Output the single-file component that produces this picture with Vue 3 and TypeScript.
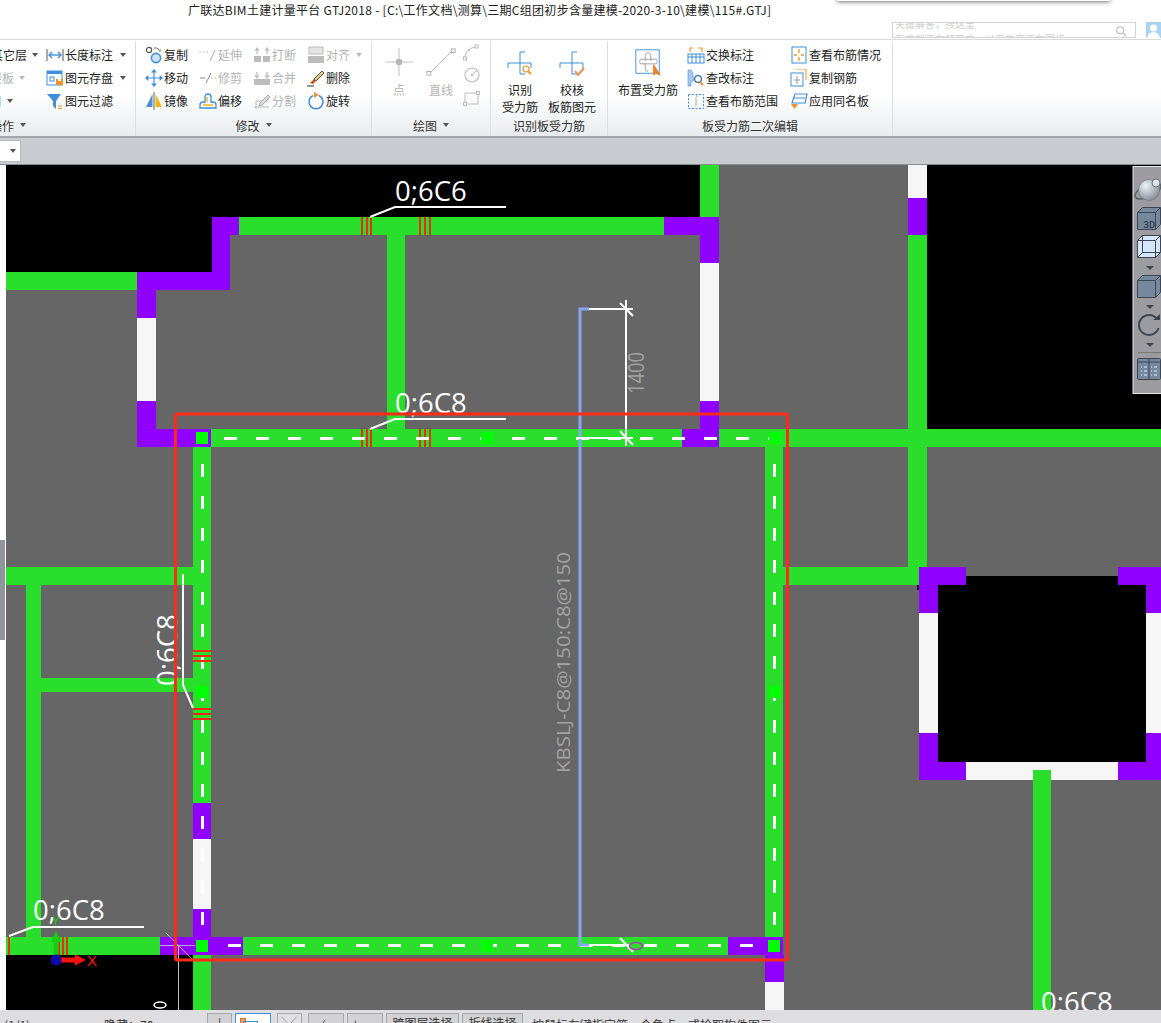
<script setup lang="ts">
// ribbon data + drawing data, coordinates of the canvas are page pixels (see viewBox)
interface Tool {
  label: string
  icon: string
  off?: boolean
  caret?: boolean
}

const B = '#3f8fdc'
const O = '#f0922b'
const G = '#bcbcbc'

const icons: Record<string, string> = {
  length: `<path d="M1 3v12M17 3v12" stroke="#555"/><path d="M3 9h12" stroke="${B}" stroke-width="1.4"/><path d="M6 6L3 9l3 3M12 6l3 3-3 3" fill="none" stroke="${B}" stroke-width="1.4"/>`,
  save: `<rect x="1" y="2" width="15" height="14" fill="#fff" stroke="${B}"/><rect x="1" y="2" width="15" height="3" fill="${B}"/><rect x="4" y="8" width="4" height="4" fill="none" stroke="${B}"/><rect x="10" y="10" width="7" height="6" fill="${O}"/><rect x="12" y="10" width="3" height="2" fill="#fff"/>`,
  filter: `<path d="M1 2h14L10 9v8L7 14V9z" fill="${B}"/><path d="M12 14h4M12 16.500h4" stroke="${O}" stroke-width="1.2"/>`,
  copy: `<circle cx="4" cy="4" r="2.600" fill="none" stroke="#555" stroke-width="1.2"/><path d="M9 2h3l2 2M15 3v3" fill="none" stroke="#777"/><circle cx="11" cy="12" r="4.600" fill="#cfe2f6" stroke="${B}" stroke-width="1.6"/>`,
  move: `<path d="M3 9h12M9 3v12" stroke="${B}" stroke-width="1.2"/><path d="M9 0l3 3.400H6zM9 18l3-3.400H6zM0 9l3.400-3v6zM18 9l-3.400-3v6z" fill="${B}"/>`,
  mirror: `<path d="M7.500 2v13H1z" fill="#4a8fd8"/><path d="M10.500 2v13H17z" fill="#f5b50f"/><path d="M9 0v18" stroke="#666"/>`,
  extend: `<path d="M0 6h9" stroke="${G}" stroke-dasharray="2 1.5"/><path d="M11 15l5-11" stroke="${G}" stroke-width="1.2"/>`,
  trim: `<path d="M1 9h5" stroke="#888"/><path d="M7 14l5-10" stroke="#888"/><path d="M12 9h6" stroke="${G}" stroke-dasharray="2 1.5"/>`,
  offset: `<path d="M1 16v-3q0-3 3-3h2V5q0-3 3-3t3 3v5h2q3 0 3 3v3z" fill="none" stroke="${B}" stroke-width="1.3"/><path d="M4 13h10M8 10V5" fill="none" stroke="#f5b50f" stroke-width="1.3"/>`,
  breakIt: `<rect x="1" y="10" width="7" height="6" fill="${G}"/><rect x="10" y="10" width="7" height="6" fill="${G}"/><path d="M4 3v5M14 3v5M2 5l2-3 2 3M12 5l2-3 2 3" fill="none" stroke="${G}" stroke-width="1.2"/>`,
  merge: `<rect x="1" y="10" width="16" height="6" fill="${G}"/><path d="M4 3v5M14 3v5M2 6l2 3 2-3M12 6l2 3 2-3" fill="none" stroke="${G}" stroke-width="1.2"/>`,
  split: `<path d="M1 15h15M3 17V9h12" fill="none" stroke="${G}"/><path d="M7 11l8-8 2 2-8 8-3 1z" fill="#ddd" stroke="#a8a8a8"/>`,
  align: `<rect x="2" y="1" width="14" height="7" fill="#e4e4e4" stroke="${G}"/><rect x="1" y="10" width="16" height="7" fill="${G}"/>`,
  erase: `<path d="M7 10l8-8 2 2-8 8z" fill="#e9c57a" stroke="#555"/><path d="M7 10l2 2-3 3-3-1z" fill="#c8501e"/><path d="M0 17h7" stroke="#333"/>`,
  rotate: `<path d="M6 3.500a7 7 0 1 0 6 0" fill="none" stroke="${B}" stroke-width="1.5"/><path d="M7 0l5 3-5 3z" fill="${O}"/>`,
  arc: `<path d="M2 15q0-9 10-11" fill="none" stroke="${G}"/><rect x="0.500" y="14" width="3" height="3" fill="#fff" stroke="${G}"/><rect x="12" y="2" width="3" height="3" fill="#fff" stroke="${G}"/><rect x="5" y="6" width="2" height="2" fill="${G}"/>`,
  circle: `<circle cx="9" cy="9" r="7" fill="none" stroke="${G}" stroke-width="1.2"/><circle cx="9" cy="9" r="1.2" fill="${G}"/><path d="M10 8l3-3" stroke="${G}"/>`,
  rect: `<rect x="2" y="4" width="13" height="11" fill="none" stroke="${G}"/><rect x="0.500" y="13.500" width="3" height="3" fill="#fff" stroke="${G}"/><rect x="13.500" y="2.500" width="3" height="3" fill="#fff" stroke="${G}"/>`,
  swap: `<rect x="1" y="8" width="16" height="9" fill="#fff" stroke="${B}"/><path d="M1 11h16M5 8v9M9 8v9M13 8v9" stroke="${B}"/><path d="M3 6V2h3M11 2h4v4" fill="none" stroke="${O}" stroke-width="1.2"/>`,
  check: `<path d="M1 1h3l2 3v4l1 3-3 2v4H1z" fill="#a9c8ec" stroke="${B}" stroke-width=".6"/><circle cx="11" cy="10" r="3.400" fill="#fff" stroke="#3a6ea8" stroke-width="1.3"/><path d="M13 13l3 3" stroke="${O}" stroke-width="2"/>`,
  range: `<rect x="1.500" y="2.500" width="15" height="14" fill="none" stroke="${B}" stroke-dasharray="2 1.5"/><path d="M9 5v9" stroke="#aaa"/><path d="M9 4h2" stroke="${O}"/>`,
  view: `<rect x="2" y="1" width="14" height="16" fill="none" stroke="${B}"/><path d="M9 3v4M9 11v4M4 9h3M11 9h3" stroke="${O}" stroke-width="1.3"/>`,
  copyBar: `<path d="M5 0h11v11" fill="none" stroke="${O}"/><rect x="1" y="4" width="12" height="13" fill="#fff" stroke="${B}"/><path d="M7 7v8M4 11h6" stroke="#999"/>`,
  apply: `<path d="M5 2h12l-2 9H2z" fill="#fff" stroke="${B}" stroke-width="1.2"/><path d="M4 6h11" stroke="${B}"/><path d="M1 12h7l-3.500 5z" fill="${O}"/>`,
}

const editTools: Tool[] = [
  { label: '复制', icon: 'copy' },
  { label: '延伸', icon: 'extend', off: true },
  { label: '打断', icon: 'breakIt', off: true },
  { label: '对齐', icon: 'align', off: true, caret: true },
  { label: '移动', icon: 'move' },
  { label: '修剪', icon: 'trim', off: true },
  { label: '合并', icon: 'merge', off: true },
  { label: '删除', icon: 'erase' },
  { label: '镜像', icon: 'mirror' },
  { label: '偏移', icon: 'offset' },
  { label: '分割', icon: 'split', off: true },
  { label: '旋转', icon: 'rotate' },
]

const markTools: Tool[] = [
  { label: '长度标注', icon: 'length', caret: true },
  { label: '图元存盘', icon: 'save', caret: true },
  { label: '图元过滤', icon: 'filter' },
]

const rebarTools: Tool[] = [
  { label: '交换标注', icon: 'swap' },
  { label: '查看布筋情况', icon: 'view' },
  { label: '查改标注', icon: 'check' },
  { label: '复制钢筋', icon: 'copyBar' },
  { label: '查看布筋范围', icon: 'range' },
  { label: '应用同名板', icon: 'apply' },
]

const GREEN = '#2adf2c'
const PURPLE = '#8f00ff'
const WHITE = '#f6f6f6'
const BLACK = '#000'

type Box = [number, number, number, number, string]

// x, y, w, h, colour
const boxes: Box[] = [
  // black rooms
  [6, 165, 694, 52, BLACK],
  [6, 217, 206, 55, BLACK],
  [927, 165, 234, 265, BLACK],
  [6, 955, 187, 55, BLACK],
  [938, 585, 208, 177, BLACK],
  [966, 576, 152, 9, BLACK],
  [917, 575, 3, 15, BLACK],
  // top room
  [700, 165, 19, 52, GREEN],
  [239, 217, 425, 18, GREEN],
  [664, 217, 55, 18, PURPLE],
  [700, 235, 19, 28, PURPLE],
  [700, 263, 19, 138, WHITE],
  [700, 401, 19, 29, PURPLE],
  [387, 235, 18, 195, GREEN],
  [212, 217, 27, 18, PURPLE],
  [212, 235, 18, 37, PURPLE],
  [137, 272, 93, 18, PURPLE],
  [6, 272, 131, 18, GREEN],
  [137, 290, 19, 28, PURPLE],
  [137, 318, 19, 83, WHITE],
  [137, 401, 19, 46, PURPLE],
  // long horizontal
  [211, 429, 950, 18, GREEN],
  [137, 429, 74, 18, PURPLE],
  [682, 429, 37, 18, PURPLE],
  // right column
  [908, 165, 19, 33, WHITE],
  [908, 198, 19, 37, PURPLE],
  [908, 235, 19, 332, GREEN],
  [783, 567, 136, 18, GREEN],
  // main room
  [193, 447, 18, 356, GREEN],
  [193, 803, 18, 36, PURPLE],
  [193, 839, 18, 70, WHITE],
  [193, 909, 18, 28, PURPLE],
  [193, 955, 18, 55, GREEN],
  [765, 447, 18, 490, GREEN],
  [765, 955, 19, 27, PURPLE],
  [765, 982, 19, 28, WHITE],
  [6, 937, 154, 18, GREEN],
  [160, 937, 83, 18, PURPLE],
  [243, 937, 485, 18, GREEN],
  [728, 937, 55, 18, PURPLE],
  // left rooms
  [6, 567, 187, 18, GREEN],
  [26, 585, 15, 352, GREEN],
  [41, 678, 152, 14, GREEN],
  // square block
  [919, 567, 47, 18, PURPLE],
  [919, 585, 19, 28, PURPLE],
  [919, 613, 19, 120, WHITE],
  [919, 733, 19, 47, PURPLE],
  [938, 762, 28, 18, PURPLE],
  [966, 762, 152, 18, WHITE],
  [1118, 762, 43, 18, PURPLE],
  [1146, 733, 15, 29, PURPLE],
  [1146, 613, 15, 120, WHITE],
  [1118, 567, 43, 18, PURPLE],
  [1146, 585, 15, 28, PURPLE],
  [1033, 770, 18, 240, GREEN],
]

const range = (from: number, to: number, step: number) => {
  const out: number[] = []
  for (let v = from; v <= to; v += step) out.push(v)
  return out
}

const dashTopX = range(224, 768, 32)
const dashBottomX = range(228, 740, 32)
const dashY = range(464, 912, 32)

const nodes = [
  [202, 438], [487, 438], [775, 438],
  [202, 692], [775, 692],
  [202, 946], [487, 946], [774, 946],
]

const rebarX = [361, 366, 370, 419, 424, 429]
const rebarLow = [8, 58, 62, 66]
const rebarH = [650, 655, 660, 708, 713, 718]
</script>

<template>
  <div class="app">
    <header class="title-bar">
      <div class="title">广联达BIM土建计量平台 GTJ2018 - [C:\工作文档\测算\三期C组团初步含量建模-2020-3-10\建模\115#.GTJ]</div>
      <div class="float-shadow"></div>
      <div class="search-row">
        <div class="search">
          <div class="search-text">
            <span>关键解答，搜这里</span>
            <span>有文档正在打开中，以下内容正在同步</span>
          </div>
          <svg class="glass" viewBox="0 0 14 14"><circle cx="6" cy="6" r="4" fill="none" stroke="#bbb" stroke-width="1.2"/><path d="M9 9l4 4" stroke="#bbb" stroke-width="1.4"/></svg>
        </div>
        <svg class="user" viewBox="0 0 15 16"><rect width="15" height="16" fill="#a9d2f5"/><circle cx="7.500" cy="6" r="3.600" fill="#fff"/><path d="M1 16q1-6 6.500-6t6.500 6z" fill="#fff"/></svg>
      </div>
    </header>

    <section class="ribbon">
      <div class="group g-layer">
        <div class="group-body">
          <div class="clip-col">
            <div class="clip-row r1"><span>其它层</span><i class="caret"></i></div>
            <div class="clip-row r2 off"><span>楼板</span><i class="caret"></i></div>
            <div class="clip-row r3"><span>目</span><i class="caret"></i></div>
          </div>
          <div class="tool-col">
            <div v-for="t in markTools" :key="t.label" class="tool">
              <svg class="ico" viewBox="0 0 18 18" v-html="icons[t.icon]"></svg>
              <span>{{ t.label }}</span>
              <i v-if="t.caret" class="caret wide"></i>
            </div>
          </div>
        </div>
        <div class="group-foot foot-end"><span>操作</span><i class="caret"></i></div>
      </div>

      <div class="group g-edit">
        <div class="group-body edit-grid">
          <div v-for="t in editTools" :key="t.label" class="tool" :class="{ off: t.off }">
            <svg class="ico" viewBox="0 0 18 18" v-html="icons[t.icon]"></svg>
            <span>{{ t.label }}</span>
            <i v-if="t.caret" class="caret"></i>
          </div>
        </div>
        <div class="group-foot">修改<i class="caret"></i></div>
      </div>

      <div class="group g-draw">
        <div class="group-body">
          <div class="big off w42">
            <svg class="big-ico" viewBox="0 0 32 32"><path d="M1 16h30M16 1v30" stroke="#c4c4c4" stroke-width="1.2"/><circle cx="16" cy="16" r="3.500" fill="#b4b4b4"/></svg>
            <span>点</span>
          </div>
          <div class="big off w42">
            <svg class="big-ico" viewBox="0 0 32 32"><path d="M3 29L29 3" stroke="#b8b8b8"/><rect x="1" y="26" width="4" height="4" fill="#fff" stroke="#aaa"/><rect x="27" y="2" width="4" height="4" fill="#fff" stroke="#aaa"/></svg>
            <span>直线</span>
          </div>
          <div class="mini-col">
            <svg class="ico" viewBox="0 0 18 18" v-html="icons.arc"></svg>
            <svg class="ico" viewBox="0 0 18 18" v-html="icons.circle"></svg>
            <svg class="ico" viewBox="0 0 18 18" v-html="icons.rect"></svg>
          </div>
        </div>
        <div class="group-foot">绘图<i class="caret"></i></div>
      </div>

      <div class="group g-detect">
        <div class="group-body">
          <div class="big w52">
            <svg class="big-ico" viewBox="0 0 30 30">
              <path d="M20 5h-5v22h5M3 21v-5h23v5" fill="none" stroke="#3f8fdc" />
              <circle cx="21" cy="22" r="3" fill="#fff" stroke="#f0922b" stroke-width="1.200"/>
              <path d="M23.500 24.500l2.500 2.500" stroke="#f0922b" stroke-width="1.800"/>
            </svg>
            <span>识别</span>
            <span>受力筋</span>
          </div>
          <div class="big w52">
            <svg class="big-ico" viewBox="0 0 30 30">
              <path d="M20 5h-5v22h5M3 21v-5h23v5" fill="none" stroke="#3f8fdc" />
              <path d="M18 24l3 4 6-7" fill="none" stroke="#f08a5a" stroke-width="2"/>
            </svg>
            <span>校核</span>
            <span>板筋图元</span>
          </div>
        </div>
        <div class="group-foot">识别板受力筋</div>
      </div>

      <div class="group g-rebar">
        <div class="group-body">
          <div class="big w70">
            <svg class="big-ico" viewBox="0 0 32 32">
              <rect x="3" y="3" width="25" height="25" fill="#fff" stroke="#3f8fdc"/>
              <path d="M13 15V9q0-3 3-3t3 3v6M13 17v6q0 3 3 3M8 13h17q2 2 0 5H8q-2-3 0-5z" fill="none" stroke="#a0a0a0"/>
              <path d="M22 19v11l2-2 5 2z" fill="#ee7f22" stroke="#ee7f22"/>
            </svg>
            <span>布置受力筋</span>
          </div>
          <div class="rebar-grid">
            <div v-for="t in rebarTools" :key="t.label" class="tool">
              <svg class="ico" viewBox="0 0 18 18" v-html="icons[t.icon]"></svg>
              <span>{{ t.label }}</span>
            </div>
          </div>
        </div>
        <div class="group-foot">板受力筋二次编辑</div>
      </div>
      <div class="group-rest"></div>
    </section>

    <div class="strip">
      <div class="combo"><i class="caret"></i></div>
    </div>

    <svg class="canvas" viewBox="0 165 1161 845" width="1161" height="845">
      <defs>
        <radialGradient id="ball" cx="0.35" cy="0.3" r="0.8">
          <stop offset="0" stop-color="#eef2f6" />
          <stop offset="1" stop-color="#7c8690" />
        </radialGradient>
      </defs>
      <rect x="0" y="165" width="1161" height="845" fill="#666" />
      <rect x="0" y="165" width="6" height="845" fill="#fff" />
      <rect x="0" y="540" width="5" height="100" fill="#8f959c" />

      <rect v-for="(b, i) in boxes" :key="i" :x="b[0]" :y="b[1]" :width="b[2]" :height="b[3]" :fill="b[4]" />

      <!-- rebar ticks -->
      <template v-for="x in rebarX" :key="'t' + x">
        <rect :x="x" y="217" width="2" height="18" fill="#ee2a18" />
        <rect :x="x" y="429" width="2" height="18" fill="#ee2a18" />
      </template>
      <rect v-for="x in rebarLow" :key="'l' + x" :x="x" y="937" width="2" height="18" fill="#ee2a18" />

      <!-- centre lines -->
      <rect v-for="x in dashTopX" :key="'dt' + x" :x="x" y="437" width="13" height="3" fill="#fff" />
      <rect v-for="x in dashBottomX" :key="'db' + x" :x="x" y="944" width="13" height="3" fill="#fff" />
      <template v-for="y in dashY" :key="'dv' + y">
        <rect x="201" :y="y" width="3" height="13" fill="#fff" />
        <rect x="773" :y="y" width="3" height="13" fill="#fff" />
      </template>
      <rect v-for="y in rebarH" :key="'h' + y" x="193" :y="y" width="18" height="2" fill="#ee2a18" />

      <rect v-for="(n, i) in nodes" :key="'n' + i" :x="n[0] - 6" :y="n[1] - 6" width="12" height="12" fill="#00ff00" />

      <!-- rebar annotations -->
      <g class="leader">
        <path d="M370 217L395 207H506" />
        <path d="M370 429L395 419H506" />
        <path d="M9 936L33 927H144" />
        <path d="M183 574V685L193 708" />
      </g>
      <text class="mark" x="395" y="201">0;6C6</text>
      <text class="mark" x="395" y="413">0;6C8</text>
      <text class="mark" x="33" y="920">0;6C8</text>
      <text class="mark" transform="translate(177 686) rotate(-90)">0;6C8</text>
      <text class="mark" x="1041" y="1012">0;6C8</text>

      <!-- span line -->
      <path d="M589 309H580V945H589" fill="none" stroke="#8aa5f5" stroke-width="3" />
      <g class="dim">
        <path d="M589 309H633M626 300V446M620 303L633 316M577 438H633M620 431L633 445" />
        <path d="M589 945H630M620 938L633 952" />
      </g>
      <ellipse cx="636" cy="946" rx="6.500" ry="3.500" fill="none" stroke="#b53ab5" stroke-width="1.500" />
      <text class="dim-text" transform="translate(644 394) rotate(-90)" textLength="42" lengthAdjust="spacingAndGlyphs">1400</text>
      <text class="span-text" transform="translate(570 773) rotate(-90)" textLength="221" lengthAdjust="spacingAndGlyphs">KBSLJ-C8@150:C8@150</text>

      <!-- cross cursor and coordinate axes -->
      <path d="M166 933L192 959M160 945.500H195" stroke="#cfcfcf" stroke-width="1" opacity=".8" />
      <path d="M178.500 946V1010" stroke="#bdbdbd" />
      <ellipse cx="160" cy="1005" rx="6" ry="3" fill="none" stroke="#fff" stroke-width="1.500" />
      <path d="M56 958V942" stroke="#0fd10f" stroke-width="5" />
      <path d="M56 931l5.500 11h-11z" fill="#0fd10f" />
      <text class="axis-y" x="52" y="925">Y</text>
      <path d="M58 960H76" stroke="#ff1010" stroke-width="5" />
      <path d="M86 960l-11-5.500v11z" fill="#ff1010" />
      <circle cx="56" cy="960" r="5.500" fill="#0a0aa8" />
      <text class="axis-x" x="87" y="966">X</text>

      <!-- selection box -->
      <rect x="175.500" y="414" width="612" height="546" rx="2" fill="none" stroke="#ff2a18" stroke-width="3" />

      <!-- view tools -->
      <g>
        <rect x="1133" y="166.500" width="29" height="227" fill="#9c9ca0" stroke="#e8e8e8" />
        <ellipse cx="1148" cy="191" rx="14" ry="6" transform="rotate(-25 1148 191)" fill="none" stroke="#5c626a" stroke-width="1.500" />
        <circle cx="1149" cy="190" r="10.500" fill="url(#ball)" stroke="#6a7078" stroke-width=".6" />
        <circle cx="1156" cy="183" r="4" fill="#dfe4ea" stroke="#6a7078" />

        <g class="cube">
          <path d="M1137.500 212.500h18v17h-18zM1137.500 212.500l5-5h18v17l-5 5M1155.500 212.500l5-5" fill="#76889e" />
        </g>
        <text class="view-3d" x="1143" y="228">3D</text>

        <g class="cube">
          <path d="M1137.500 240.500h18v17h-18zM1137.500 240.500l5-5h18v17l-5 5M1155.500 240.500l5-5" fill="#d5e6fa" />
          <path d="M1142.500 235.500v17h18M1142.500 252.500l-5 5" fill="none" />
        </g>
        <path d="M1146 266h8l-4 4z" fill="#3d4652" />

        <g class="cube">
          <path d="M1137.500 280.500h18v17h-18zM1137.500 280.500l5-5h18v17l-5 5M1155.500 280.500l5-5" fill="#76889e" />
        </g>
        <path d="M1146 305h8l-4 4z" fill="#3d4652" />

        <path d="M1157 319a10 10 0 1 0 1.500 9" fill="none" stroke="#3d4652" stroke-width="2" />
        <path d="M1153 320h7v-6z" fill="#3d4652" />
        <path d="M1146 343h8l-4 4z" fill="#3d4652" />
        <path d="M1138 352.500h23" stroke="#777" />
        <rect x="1137.500" y="358.500" width="23" height="21" rx="1" fill="#76889e" stroke="#3d4652" />
        <path d="M1149 359v20M1137.500 362h23" stroke="#3d4652" />
        <path d="M1141 367h1M1144 367h3M1141 371h1M1144 371h3M1141 375h1M1144 375h3M1151 367h1M1154 367h3M1151 371h1M1154 371h3M1151 375h1M1154 375h3" stroke="#e8eef5" stroke-width="1.200" />
      </g>
    </svg>

    <footer class="status">
      <span class="st-page">(1/1)</span>
      <span class="st-hide">隐藏：70</span>
      <button class="st-btn b1">|</button>
      <button class="st-btn b2"><i class="b2-mark"></i><i class="b2-box"></i></button>
      <button class="st-btn b3">
        <svg viewBox="0 0 25 14"><path d="M4 1l8 9 8-9" fill="none" stroke="#999" /></svg>
      </button>
      <button class="st-btn b4">
        <svg viewBox="0 0 36 14"><path d="M12 12l5-8" stroke="#555" /></svg>
      </button>
      <button class="st-btn b5">+</button>
      <button class="st-btn b6">跨图层选择</button>
      <button class="st-btn b7">折线选择</button>
      <span class="st-hint">按鼠标左键指定第一个角点，或拾取构件图元</span>
    </footer>
  </div>
</template>

<style>
html,
body {
  margin: 0;
  background: #fff;
}
</style>

<style scoped>
.app {
  position: relative;
  width: 1161px;
  height: 1023px;
  overflow: hidden;
  display: flex;
  flex-direction: column;
  font-family: "Noto Sans CJK SC", "Noto Sans", sans-serif;
  font-size: 12px;
  color: #222;
  background: #fff;
}

.title-bar {
  height: 40px;
  box-sizing: border-box;
  flex: none;
  background: #fff;
  border-bottom: 1px solid #d9d9d9;
}

.title {
  height: 20px;
  padding-left: 188px;
  line-height: 20px;
  letter-spacing: 0.29px;
  color: #222;
  white-space: nowrap;
}

.float-shadow {
  position: absolute;
  left: 837px;
  top: -6px;
  width: 273px;
  height: 7px;
  background: #fff;
  box-shadow: 0 1px 4px rgba(0, 0, 0, 0.55);
}

.search-row {
  display: flex;
  justify-content: flex-end;
  gap: 10px;
  padding-top: 2px;
}

.search {
  width: 244px;
  height: 16px;
  box-sizing: border-box;
  border: 1px solid #d4d4d4;
  display: flex;
  justify-content: space-between;
  overflow: hidden;
}

.search-text {
  display: flex;
  flex-direction: column;
  margin-top: -7px;
  font-size: 10px;
  line-height: 15px;
  color: #cfcfcf;
  padding-left: 2px;
  white-space: nowrap;
}

.glass {
  width: 12px;
  height: 12px;
  margin: 2px 8px 0 0;
}

.user {
  width: 15px;
  height: 16px;
}

.ribbon {
  height: 98px;
  flex: none;
  box-sizing: border-box;
  display: flex;
  background: linear-gradient(#fff 0%, #fff 55%, #e9ecee 100%);
  border-bottom: 2px solid #a4a7aa;
}

.group {
  display: flex;
  flex-direction: column;
  flex: none;
  box-sizing: border-box;
  border-right: 1px solid #dcdfe0;
  margin-top: 1px;
}

.g-layer { width: 136px; }
.g-edit { width: 236px; }
.g-draw { width: 119px; }
.g-detect { width: 117px; }
.g-rebar { width: 285px; }
.group-rest { flex: 1; }

.group-body {
  flex: 1;
  display: flex;
  padding-top: 2px;
  min-height: 0;
}

.group-foot {
  height: 20px;
  flex: none;
  display: flex;
  align-items: center;
  justify-content: center;
  gap: 6px;
  margin-bottom: 1px;
  color: #333;
  white-space: nowrap;
}

.foot-end {
  justify-content: flex-end;
  padding-right: 109px;
}

.foot-end span {
  flex: none;
}

.caret {
  display: inline-block;
  width: 0;
  height: 0;
  flex: none;
  border-left: 3.5px solid transparent;
  border-right: 3.5px solid transparent;
  border-top: 4px solid #555;
  margin-left: 5px;
}

.group-foot .caret {
  margin-left: 0;
}

.caret.wide {
  margin-left: 6px;
}

.clip-col {
  width: 46px;
  flex: none;
}

.clip-row {
  height: 23px;
  display: flex;
  align-items: center;
  justify-content: flex-end;
  white-space: nowrap;
}

.clip-row span {
  flex: none;
}

.r1 { width: 38px; }
.r2 { width: 25px; }
.r3 { width: 13px; }

.off {
  color: #b4b4b4;
}

.off .caret {
  border-top-color: #bbb;
}

.tool {
  height: 23px;
  display: flex;
  align-items: center;
  gap: 1px;
  white-space: nowrap;
}

.ico {
  width: 18px;
  height: 18px;
  flex: none;
}

.edit-grid {
  display: grid;
  grid-template-columns: repeat(4, 54px);
  grid-auto-rows: 23px;
  padding-left: 9px;
}

.big {
  display: flex;
  flex-direction: column;
  align-items: center;
  flex: none;
  line-height: 17px;
  white-space: nowrap;
}

.big-ico {
  width: 30px;
  height: 30px;
  margin: 4px 0;
  flex: none;
}

.w42 { width: 42px; }
.w52 { width: 52px; }
.w70 { width: 70px; }

.g-draw .group-body { padding-left: 6px; }
.g-detect .group-body { padding-left: 3px; }
.g-rebar .group-body { padding-left: 5px; }

.mini-col {
  width: 20px;
  display: flex;
  flex-direction: column;
  align-items: center;
  gap: 5px;
}

.rebar-grid {
  display: grid;
  grid-template-columns: 103px auto;
  grid-auto-rows: 23px;
  margin-left: 4px;
}

.strip {
  height: 27px;
  flex: none;
  box-sizing: border-box;
  background: #c8cbcf;
  border-bottom: 1px solid #8b8d90;
  padding-top: 2px;
}

.combo {
  width: 22px;
  height: 22px;
  margin-left: -1px;
  box-sizing: border-box;
  background: #fff;
  border: 1px solid #bbb;
  display: flex;
  align-items: center;
  justify-content: flex-end;
  padding-right: 4px;
}

.canvas {
  display: block;
  flex: none;
}

.leader path {
  fill: none;
  stroke: #fff;
  stroke-width: 2;
}

.dim path {
  fill: none;
  stroke: #fff;
  stroke-width: 2;
}

.mark {
  font-family: "Open Sans", sans-serif;
  font-size: 27.5px;
  fill: #fff;
}

.dim-text {
  font-family: "Open Sans", sans-serif;
  font-size: 22px;
  fill: #a2a2a2;
}

.span-text {
  font-family: "Open Sans", sans-serif;
  font-size: 19px;
  fill: #a2a2a2;
}

.axis-x {
  font-family: "Liberation Sans", sans-serif;
  font-size: 15px;
  fill: #ff1010;
}

.axis-y {
  font-family: "Liberation Sans", sans-serif;
  font-size: 11px;
  fill: #0fd10f;
}

.cube path {
  stroke: #3d4652;
}

.view-3d {
  font-family: "Liberation Mono", monospace;
  font-size: 10px;
  fill: #1e2a38;
}

.status {
  flex: 1;
  min-height: 0;
  background: #dedee0;
  display: flex;
  padding-top: 3px;
  position: relative;
  overflow: hidden;
}

.status > span {
  margin-top: 4px;
  line-height: 16px;
  flex: none;
  white-space: nowrap;
  color: #333;
}

.st-page { width: 104px; padding-left: 4px; box-sizing: border-box; }
.st-hide { width: 103px; }
.st-hint { margin-left: 6px; }

.st-btn {
  height: 22px;
  box-sizing: border-box;
  flex: none;
  padding: 2px 0 0;
  margin: 0 3px 0 0;
  background: #d2d2d4;
  border: 1px solid #a8a8a8;
  border-radius: 0;
  font: inherit;
  font-size: 12px;
  color: #333;
  line-height: 14px;
  display: flex;
  justify-content: center;
  align-items: flex-start;
  position: relative;
}

.st-btn svg {
  display: block;
  width: 100%;
}

.b1 { width: 25px; }
.b2 { width: 36px; background: #fff; border-color: #3d8fe0; margin-right: 6px; }
.b3 { width: 25px; margin-right: 6px; background: #e0e0e2; }
.b4 { width: 36px; }
.b5 { width: 36px; justify-content: flex-start; padding-left: 4px; }
.b6 { width: 73px; }
.b7 { width: 61px; }

.b2-mark {
  position: absolute;
  left: 4px;
  top: 4px;
  width: 4px;
  height: 4px;
  background: #f0a060;
  border: 1px solid #d8752a;
}

.b2-box {
  position: absolute;
  left: 7px;
  top: 7px;
  width: 13px;
  height: 12px;
  border: 1px solid #3d8fe0;
}
</style>
